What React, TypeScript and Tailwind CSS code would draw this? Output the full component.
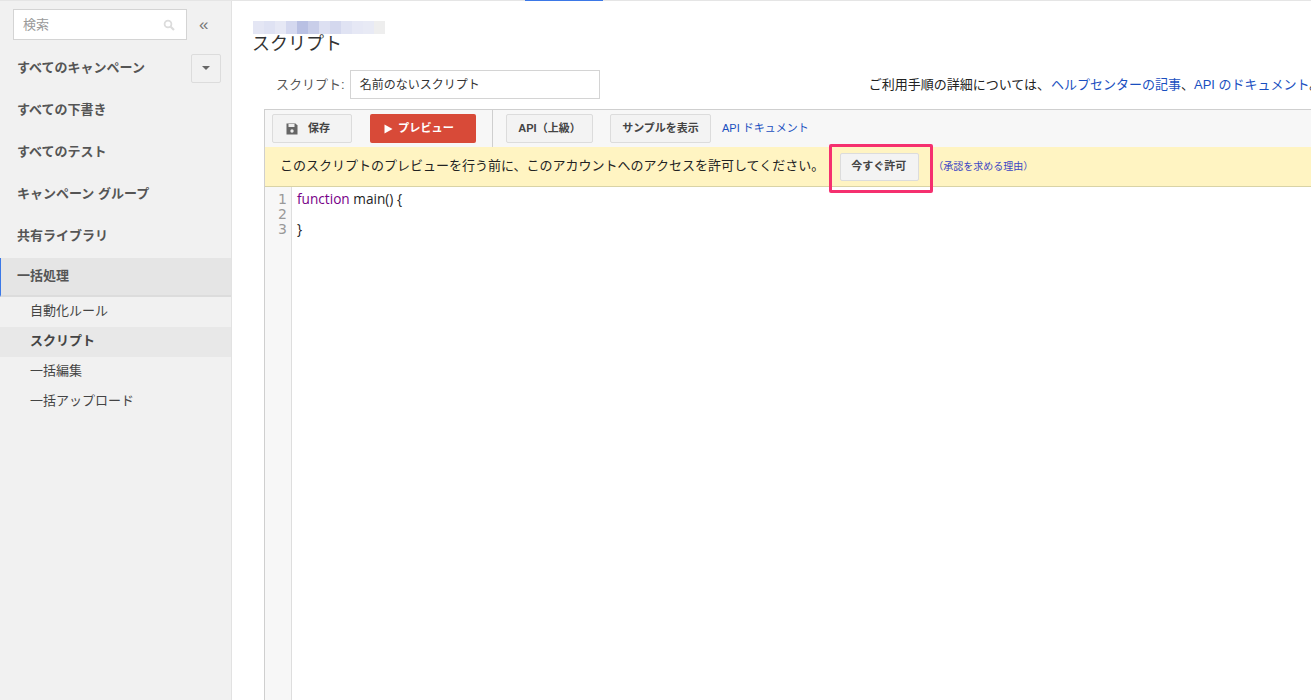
import React from "react";

const FONT = "font-['Liberation_Sans','Noto_Sans_CJK_JP',sans-serif]";

function SideItem({ label }: { label: string }) {
  return (
    <div className="h-[42px] flex items-center text-[13px] font-bold text-[#555]">
      <span className="pl-[17px]">{label}</span>
    </div>
  );
}

function SubItem({ label, active }: { label: string; active?: boolean }) {
  return (
    <div className={`h-[30px] flex items-center pl-[30px] pb-[2px] text-[13px] text-[#444] ${active ? "bg-[#e8e8e8] font-bold" : ""}`}>
      {label}
    </div>
  );
}

function Btn({ children, w, ml, cls }: { children: React.ReactNode; w: string; ml?: string; cls?: string }) {
  return (
    <div className={`${w} ${ml ?? ""} ${cls ?? ""} h-[29px] shrink-0 flex items-center justify-center rounded-[2px] border border-[#dcdcdc] bg-[#f3f3f3] text-[11px] font-bold text-[#444]`}>
      {children}
    </div>
  );
}

const blur = ["#e4e6f4", "#dfe2f3", "#e6e8f5", "#d4d8ef", "#b9c0e3", "#c9cee9", "#dde0f2", "#d4d8ee", "#e0e3f3", "#e6e8f5", "#e8eaf5", "#eeeeee"];

export default function App() {
  return (
    <div className={`${FONT} w-[1311px] h-[700px] overflow-hidden bg-white flex flex-col relative`}>
      <div className="h-px shrink-0 bg-[#e5e5e5] flex">
        <div className="ml-[525px] w-[78px] h-px bg-[#3b78e7]" />
      </div>
      <div className="flex flex-1 min-h-0">
        <aside className="w-[232px] shrink-0 bg-[#f1f1f1] border-r border-[#e2e2e2] flex flex-col">
          <div className="flex items-center pl-[13px] pt-[8px]">
            <div className="w-[174px] h-[31px] bg-white border border-[#d4d4d4] flex items-center justify-between pl-[9px] pr-[11px] text-[13px] text-[#9a9a9a]">
              <span>検索</span>
              <svg width="12" height="12" viewBox="0 0 12 12" fill="none" stroke="#dcdcdc">
                <circle cx="5" cy="5" r="3.4" strokeWidth="1.8" />
                <path d="M7.5 7.5 L11 11" strokeWidth="2.2" />
              </svg>
            </div>
            <span className="ml-[12px] text-[17px] leading-none text-[#777]">«</span>
          </div>
          <div className="flex items-center justify-between h-[42px] mt-[7px] pr-[10px]">
            <span className="pl-[17px] text-[13px] font-bold text-[#555]">すべてのキャンペーン</span>
            <div className="w-[30px] h-[29px] rounded-[2px] border border-[#dcdcdc] flex items-center justify-center">
              <div className="w-0 h-0 border-x-[4px] border-x-transparent border-t-[4px] border-t-[#666]" />
            </div>
          </div>
          <SideItem label="すべての下書き" />
          <SideItem label="すべてのテスト" />
          <SideItem label="キャンペーン グループ" />
          <SideItem label="共有ライブラリ" />
          <div className="h-[39px] mt-px bg-[#e5e5e5] border-l-[1.5px] border-[#3b78e7] border-b-2 border-b-[#dcdcdc] flex items-center pb-[2px] text-[13px] text-[#555]">
            <span className="pl-[16px] font-bold">一括処理</span>
          </div>
          <SubItem label="自動化ルール" />
          <SubItem label="スクリプト" active />
          <SubItem label="一括編集" />
          <SubItem label="一括アップロード" />
        </aside>

        <main className="flex-1 min-w-0 flex flex-col">
          <div className="ml-[21px] mt-[20px] flex h-[13px] w-[132px] shrink-0">
            {blur.map((c, i) => (
              <div key={i} className="flex-1" style={{ backgroundColor: c }} />
            ))}
          </div>
          <h1 className="ml-[20px] mt-[-1px] text-[18px] leading-[22px] font-normal text-[#333] shrink-0">スクリプト</h1>
          <div className="mt-[14px] h-[30px] flex items-center shrink-0 whitespace-nowrap">
            <span className="ml-[44px] text-[13px] text-[#555] pt-px">スクリプト:</span>
            <div className="ml-[5px] w-[250px] h-[29px] shrink-0 border border-[#d4d4d4] bg-white flex items-center pl-[9px] pt-[2px] text-[12px] text-[#333]">
              名前のないスクリプト
            </div>
            <span className="ml-[269px] pt-px text-[13px] text-[#222]">
              ご利用手順の詳細については、<span className="ml-px text-[#1a4fbf]">ヘルプセンターの記事</span>、<span className="text-[#1a4fbf]">API のドキュメント</span>。
            </span>
          </div>
          <section className="ml-[32px] mt-[10px] flex-1 min-h-0 w-[1100px] border-l border-t border-[#cfcfcf] flex flex-col">
            <div className="h-[37px] shrink-0 bg-[#f7f7f7] flex items-center pl-[7px]">
              <Btn w="w-[80px]" cls="pr-[8px]">
                <svg width="12" height="12" viewBox="0 0 12 12" className="mr-[10px]">
                  <path d="M0.5 0.5 H9.5 L11.5 2.5 V11.5 H0.5 Z" fill="#666" />
                  <rect x="2.5" y="1" width="6" height="3" fill="#eee" />
                  <circle cx="6" cy="8" r="1.7" fill="#eee" />
                </svg>
                保存
              </Btn>
              <div className="ml-[18px] w-[106px] h-[29px] shrink-0 rounded-[2px] bg-[#d84a38] flex items-center pl-[14px] text-[11.2px] font-bold text-white">
                <svg width="9" height="10" viewBox="0 0 9 10" className="mr-[5px]"><path d="M0.5 0.5 L8.5 5 L0.5 9.5 Z" fill="#fff" /></svg>
                プレビュー
              </div>
              <div className="ml-[16px] w-px h-[37px] bg-[#cfcfcf]" />
              <Btn w="w-[87px]" ml="ml-[13px]">API（上級）</Btn>
              <Btn w="w-[101px]" ml="ml-[17px]">サンプルを表示</Btn>
              <span className="ml-[11px] text-[11px] text-[#1a4fbf] whitespace-nowrap">API ドキュメント</span>
            </div>
            <div className="h-[40px] shrink-0 bg-[#fff4c2] border-b border-[#d9d3a6] flex items-center pl-[15px] whitespace-nowrap">
              <span className="text-[13px] text-[#222] pb-[2px]">このスクリプトのプレビューを行う前に、このアカウントへのアクセスを許可してください。</span>
              <div className="ml-[16px] w-[79px] h-[28px] shrink-0 rounded-[2px] border border-[#dcdcdc] bg-[#f3f3f3] flex items-center justify-center pr-[2px] pb-[1px] text-[11px] font-bold text-[#444]">
                今すぐ許可
              </div>
              <span className="ml-[14px] text-[10px] text-[#3b46c4] pb-[1px]">（承認を求める理由）</span>
            </div>
            <div className="flex flex-1 min-h-0">
              <div className="w-[27px] shrink-0 bg-[#f7f7f7] border-r border-[#dedede] pt-[5px] pr-[4px] text-right text-[14px] leading-[15px] text-[#999] font-['DejaVu_Sans',sans-serif]">
                <div>1</div>
                <div>2</div>
                <div>3</div>
              </div>
              <div className="pl-[5px] pt-[4px] text-[13.65px] leading-[15px] text-[#222] font-['Open_Sans',sans-serif]">
                <div><span className="text-[#770088]">function</span> main() {"{"}</div>
                <div>&nbsp;</div>
                <div>{"}"}</div>
              </div>
            </div>
          </section>
        </main>
      </div>
      <div className="absolute left-[829px] top-[144px] w-[104px] h-[49px] border-[3px] border-[#f5306f] rounded-[2px] pointer-events-none" />
    </div>
  );
}
